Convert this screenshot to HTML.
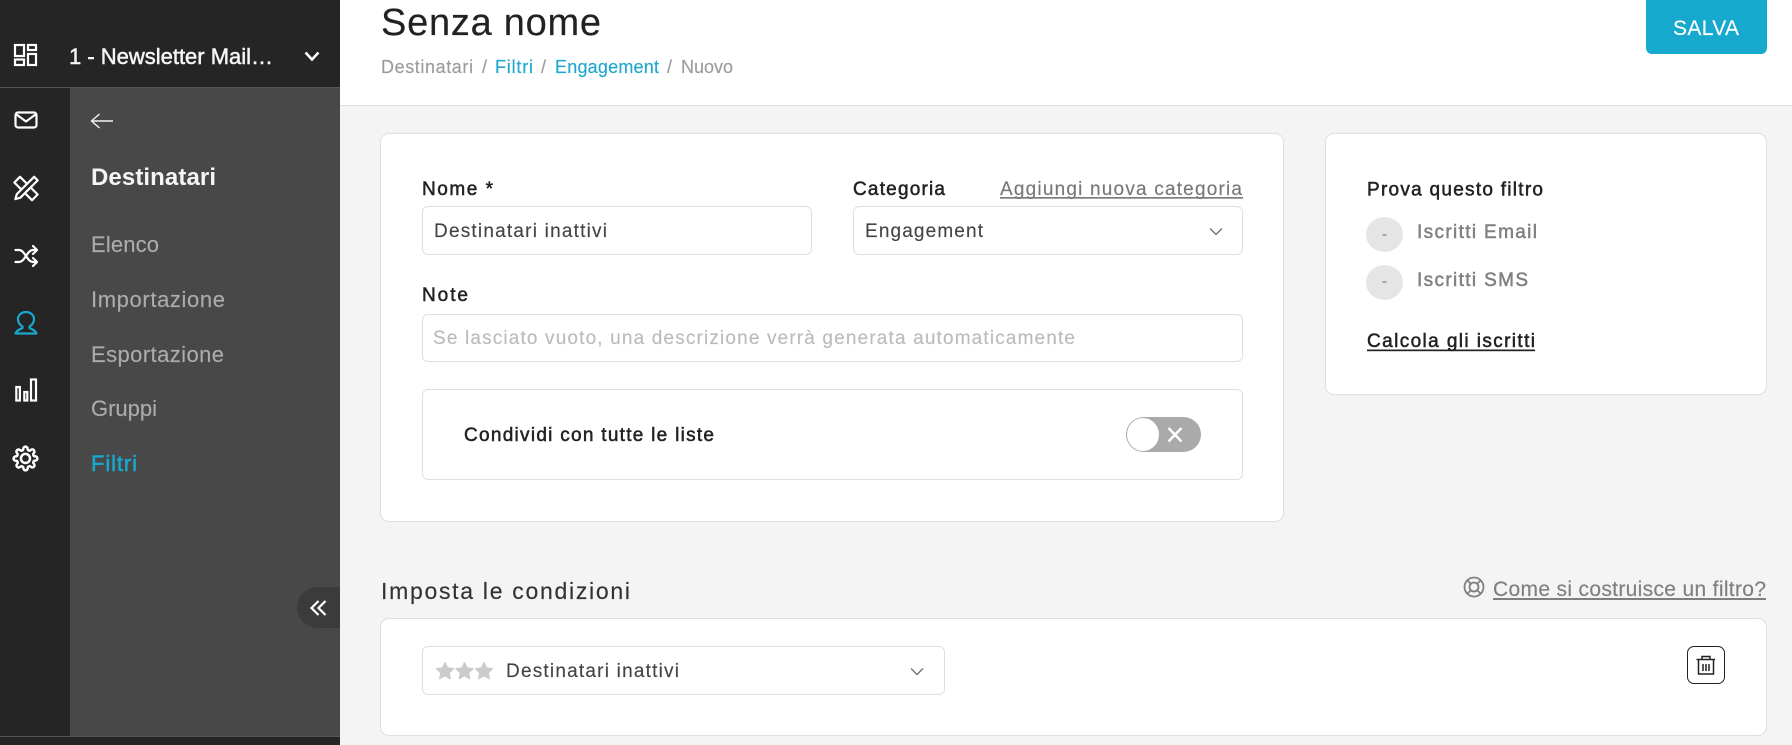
<!DOCTYPE html>
<html lang="it">
<head>
<meta charset="utf-8">
<title>Senza nome</title>
<style>
html,body{margin:0;padding:0;width:1792px;height:745px;overflow:hidden;background:#f4f4f4;font-family:"Liberation Sans",sans-serif}
.a{position:absolute;box-sizing:border-box}
.card{background:#fff;border:1px solid #dcdfe3;border-radius:9px}
.field{background:#fff;border:1px solid #dcdfe3;border-radius:6px}
svg{position:absolute;left:0;top:0}
text{font-family:"Liberation Sans",sans-serif;font-size:19px;fill:currentColor;stroke:currentColor;stroke-width:.15}
text.m{stroke-width:.5}
.i{fill:none;stroke:#fff;stroke-width:2.2;stroke-linejoin:round;stroke-linecap:round}
</style>
</head>
<body>
<div class="a" style="left:0;top:0;width:340px;height:745px;background:#252525"></div>
<div class="a" style="left:0;top:87px;width:340px;height:1px;background:#555"></div>
<div class="a" style="left:70px;top:88px;width:270px;height:648px;background:#484848"></div>
<div class="a" style="left:0;top:736px;width:340px;height:1px;background:#555"></div>
<div class="a" style="left:297px;top:587px;width:43px;height:41px;background:#3b3b3b;border-radius:21px 0 0 21px"></div>

<div class="a" style="left:340px;top:0;width:1452px;height:106px;background:#fff;border-bottom:1px solid #ddd"></div>
<div class="a" style="left:1646px;top:0;width:121px;height:54px;background:#17a8cd;border-radius:0 0 6px 6px"></div>

<div class="a card" style="left:380px;top:133px;width:904px;height:389px"></div>
<div class="a field" style="left:422px;top:206px;width:390px;height:49px"></div>
<div class="a field" style="left:853px;top:206px;width:390px;height:49px"></div>
<div class="a field" style="left:422px;top:314px;width:821px;height:48px"></div>
<div class="a field" style="left:422px;top:389px;width:821px;height:91px"></div>
<div class="a" style="left:1126px;top:417px;width:75px;height:35px;background:#aaa;border-radius:18px"></div>
<div class="a" style="left:1127px;top:418px;width:32px;height:33px;background:#fff;border-radius:50%"></div>

<div class="a card" style="left:1325px;top:133px;width:442px;height:262px"></div>
<div class="a" style="left:1366px;top:217px;width:37px;height:35px;background:#e5e5e5;border-radius:50%"></div>
<div class="a" style="left:1366px;top:265px;width:37px;height:35px;background:#e5e5e5;border-radius:50%"></div>

<div class="a card" style="left:380px;top:618px;width:1387px;height:118px"></div>
<div class="a field" style="left:422px;top:646px;width:523px;height:49px"></div>
<div class="a" style="left:1687px;top:646px;width:38px;height:38px;border:1px solid #222;border-radius:7px;background:#fff"></div>

<svg width="1792" height="745" viewBox="0 0 1792 745" xmlns="http://www.w3.org/2000/svg">
  <!-- rail icons -->
  <g class="i" style="stroke-linecap:butt;stroke-linejoin:miter">
    <rect x="15" y="45" width="9" height="11"/>
    <rect x="28" y="45" width="8" height="5"/>
    <rect x="15" y="59.500" width="9" height="5.500"/>
    <rect x="28" y="54" width="8" height="11"/>
  </g>
  <g class="i">
    <rect x="15.500" y="112.500" width="21" height="15" rx="2.500"/>
    <path d="M16.500 114.500L26 121.500L35.500 114.500"/>
  </g>
  <g class="i" stroke-width="2">
    <g transform="translate(26 188.500) rotate(45)">
      <rect x="-12.500" y="-4" width="25" height="8" fill="#252525"/>
    </g>
    <g transform="translate(26 188.500) rotate(-45)">
      <path d="M-15 0L-10.500 -2.500L14 -2.500L14 2.500L-10.500 2.500Z" fill="#252525"/>
    </g>
  </g>
  <g class="i">
    <path d="M15.500 250H19C25 250 27 262 33 262H36.500"/>
    <path d="M15.500 262H19C25 262 27 250 33 250H36.500"/>
    <path d="M33 246L37 250L33 254"/>
    <path d="M33 258L37 262L33 266"/>
  </g>
  <path class="i" style="stroke:#17a8cd" d="M15.500 333.500c1-3 4-4 7-5.500v-1.500c-2.500-1.500-4.500-4-4.500-7.500a8 7 0 0 1 16 0c0 3.500-2 6-4.500 7.500v1.500c3 1.500 6 2.500 7 5.500z"/>
  <g class="i" style="stroke-linecap:butt;stroke-linejoin:miter">
    <rect x="16.300" y="387" width="3.600" height="13.500"/>
    <rect x="24.300" y="392" width="3" height="8.500"/>
    <rect x="31" y="379.500" width="5" height="21"/>
  </g>
  <g class="i" transform="translate(12.500 445.500) scale(1.08)" style="stroke-width:2.300">
    <path d="M12 16.200a4.200 4.200 0 1 0 0-8.400 4.200 4.200 0 0 0 0 8.400z"/>
    <path d="M19.400 15a1.650 1.650 0 0 0 .33 1.820l.06.06a2 2 0 0 1 0 2.830 2 2 0 0 1-2.830 0l-.06-.06a1.650 1.650 0 0 0-1.820-.33 1.650 1.650 0 0 0-1 1.510V21a2 2 0 0 1-2 2 2 2 0 0 1-2-2v-.09A1.650 1.650 0 0 0 9 19.400a1.650 1.650 0 0 0-1.820.33l-.06.06a2 2 0 0 1-2.830 0 2 2 0 0 1 0-2.830l.06-.06a1.650 1.650 0 0 0 .33-1.820 1.650 1.650 0 0 0-1.510-1H3a2 2 0 0 1-2-2 2 2 0 0 1 2-2h.09A1.650 1.650 0 0 0 4.600 9a1.650 1.650 0 0 0-.33-1.820l-.06-.06a2 2 0 0 1 0-2.830 2 2 0 0 1 2.830 0l.06.06a1.650 1.650 0 0 0 1.820.33H9a1.650 1.650 0 0 0 1-1.510V3a2 2 0 0 1 2-2 2 2 0 0 1 2 2v.09a1.650 1.650 0 0 0 1 1.510 1.650 1.650 0 0 0 1.820-.33l.06-.06a2 2 0 0 1 2.830 0 2 2 0 0 1 0 2.830l-.06.06a1.650 1.650 0 0 0-.33 1.820V9a1.650 1.650 0 0 0 1.510 1H21a2 2 0 0 1 2 2 2 2 0 0 1-2 2h-.09a1.650 1.650 0 0 0-1.510 1z"/>
  </g>

  <!-- sidebar -->
  <text x="69" y="64" textLength="204" style="font-size:22px" color="#f5f5f5" class="m">1 - Newsletter Mail…</text>
  <path d="M305.500 52.500L312 59.500L318.500 52.500" fill="none" stroke="#fff" stroke-width="2.500"/>
  <path d="M91.500 121H113M99.500 114L91.500 121L99.500 128" fill="none" stroke="#f2f2f2" stroke-width="1.400"/>
  <text x="91" y="185" textLength="125" style="font-size:24px;font-weight:700;stroke-width:0" color="#f5f5f5">Destinatari</text>
  <text x="91" y="252" textLength="68" style="font-size:22px" color="#a9abae">Elenco</text>
  <text x="91" y="307" textLength="134" style="font-size:22px" color="#a9abae">Importazione</text>
  <text x="91" y="362" textLength="133" style="font-size:22px" color="#a9abae">Esportazione</text>
  <text x="91" y="416" textLength="66" style="font-size:22px" color="#a9abae">Gruppi</text>
  <text x="91" y="471" textLength="46" style="font-size:22px" color="#17a8cd" class="m">Filtri</text>
  <path d="M318.500 601L311.500 608L318.500 615M325.500 601L318.500 608L325.500 615" fill="none" stroke="#fff" stroke-width="2.200"/>

  <!-- header -->
  <text x="381" y="35" textLength="220" style="font-size:38px" color="#222">Senza nome</text>
  <text x="381" y="73" textLength="92" style="font-size:18px" color="#9b9b9b">Destinatari</text>
  <text x="482" y="73" style="font-size:18px" color="#9b9b9b">/</text>
  <text x="495" y="73" textLength="38" style="font-size:18px" color="#1ea8cc">Filtri</text>
  <text x="541" y="73" style="font-size:18px" color="#9b9b9b">/</text>
  <text x="555" y="73" textLength="104" style="font-size:18px" color="#1ea8cc">Engagement</text>
  <text x="667" y="73" style="font-size:18px" color="#9b9b9b">/</text>
  <text x="681" y="73" textLength="52" style="font-size:18px" color="#9b9b9b">Nuovo</text>
  <text x="1673" y="35" textLength="66" style="font-size:21px" color="#fff">SALVA</text>

  <!-- form -->
  <text x="422" y="195" textLength="71" color="#222" class="m">Nome *</text>
  <text x="853" y="195" textLength="92" color="#222" class="m">Categoria</text>
  <text x="1000" y="195" textLength="242" color="#777">Aggiungi nuova categoria</text>
  <rect x="1000" y="197" width="243" height="1.700" fill="#7d7d7d"/>
  <text x="434" y="237" textLength="173" color="#444">Destinatari inattivi</text>
  <text x="865" y="237" textLength="118" color="#444">Engagement</text>
  <path d="M1210 228.500L1216 234.500L1222 228.500" fill="none" stroke="#777" stroke-width="1.500"/>
  <text x="422" y="301" textLength="46" color="#222" class="m">Note</text>
  <text x="433" y="344" textLength="642" color="#bbb">Se lasciato vuoto, una descrizione verrà generata automaticamente</text>
  <text x="464" y="441" textLength="250" color="#222" class="m">Condividi con tutte le liste</text>
  <path d="M1168.500 428L1181.500 441.500M1181.500 428L1168.500 441.500" stroke="#fff" stroke-width="2.400" fill="none"/>

  <!-- right card -->
  <text x="1367" y="195.500" textLength="176" color="#222" class="m">Prova questo filtro</text>
  <text x="1417" y="238" textLength="120" color="#808080" class="m">Iscritti Email</text>
  <text x="1417" y="286" textLength="111" color="#808080" class="m">Iscritti SMS</text>
  <text x="1382" y="239" style="font-size:15px" color="#888">-</text>
  <text x="1382" y="286" style="font-size:15px" color="#888">-</text>
  <text x="1367" y="347" textLength="168" color="#222" class="m">Calcola gli iscritti</text>
  <rect x="1367" y="349.500" width="168" height="1.700" fill="#222"/>

  <!-- conditions -->
  <text x="381" y="599" textLength="249" style="font-size:23px" color="#333">Imposta le condizioni</text>
  <g fill="none" stroke="#7f7f7f" stroke-width="1.800">
    <circle cx="1474" cy="587" r="9.500"/>
    <circle cx="1474" cy="587" r="4.500"/>
    <path d="M1467.300 580.300L1470.800 583.800M1480.700 580.300L1477.200 583.800M1467.300 593.700L1470.800 590.200M1480.700 593.700L1477.200 590.200"/>
  </g>
  <text x="1493" y="596" textLength="273" style="font-size:21px" color="#7f7f7f">Come si costruisce un filtro?</text>
  <rect x="1493" y="598" width="273" height="2" fill="#7f7f7f"/>
  <g fill="#cbcbcb" stroke="#cbcbcb" stroke-width="1.200" stroke-linejoin="round">
    <path d="M445 662.500l2.600 5.400 6 .8-4.400 4.100 1.100 5.900-5.300-2.900-5.300 2.900 1.100-5.900-4.400-4.100 6-.8z"/>
    <path d="M464.500 662.500l2.600 5.400 6 .8-4.400 4.100 1.100 5.900-5.300-2.900-5.300 2.900 1.100-5.900-4.400-4.100 6-.8z"/>
    <path d="M484 662.500l2.600 5.400 6 .8-4.400 4.100 1.100 5.900-5.300-2.900-5.300 2.900 1.100-5.900-4.400-4.100 6-.8z"/>
  </g>
  <text x="506" y="677" textLength="173" color="#444">Destinatari inattivi</text>
  <path d="M911 668.500L917 674.500L923 668.500" fill="none" stroke="#777" stroke-width="1.500"/>
  <g fill="none" stroke="#222" stroke-width="1.500">
    <path d="M1696.500 659.500H1715"/>
    <path d="M1702 659V656.500H1710V659"/>
    <path d="M1698.500 659.500V674H1713.500V659.500"/>
    <path d="M1703 664V671M1706 664V671M1709 664V671"/>
  </g>
</svg>
</body>
</html>
